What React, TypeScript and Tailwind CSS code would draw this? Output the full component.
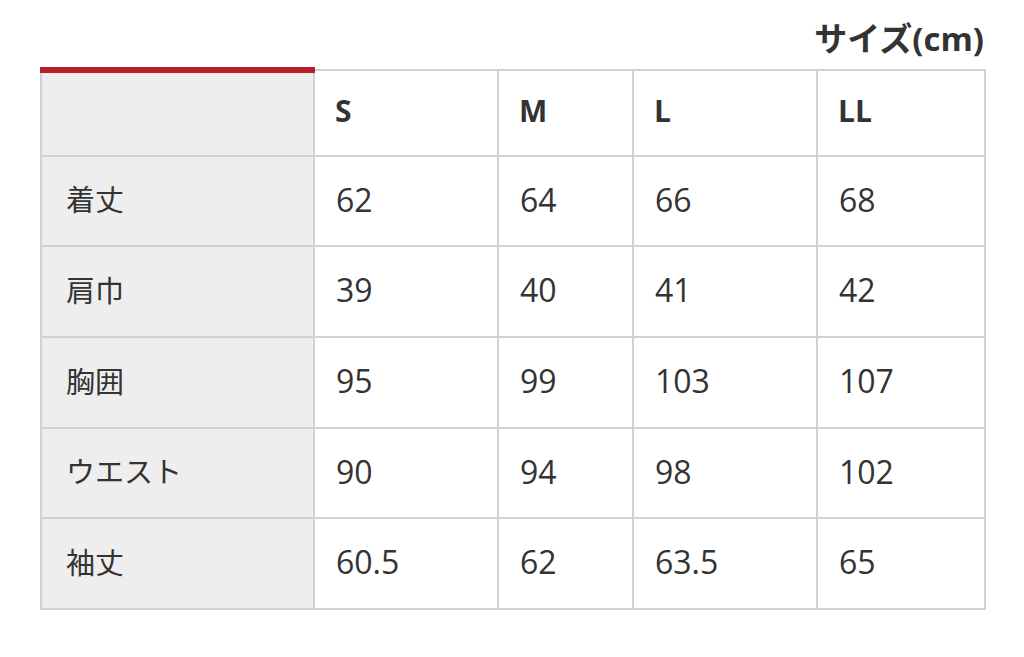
import React from 'react';

const sizes = ['S', 'M', 'L', 'LL'];

const rows: { label: string; values: string[]; h: string }[] = [
  { label: '着丈', values: ['62', '64', '66', '68'], h: 'h-[90px]' },
  { label: '肩巾', values: ['39', '40', '41', '42'], h: 'h-[91px]' },
  { label: '胸囲', values: ['95', '99', '103', '107'], h: 'h-[91px]' },
  { label: 'ウエスト', values: ['90', '94', '98', '102'], h: 'h-[90px]' },
  { label: '袖丈', values: ['60.5', '62', '63.5', '65'], h: 'h-[91px]' },
];

const colWidths = ['w-[273px]', 'w-[184px]', 'w-[135px]', 'w-[184px]', 'w-[168px]'];

export default function App() {
  return (
    <div
      className="w-[1024px] h-[657px] bg-white text-[#333]"
      style={{ fontFamily: '"Open Sans", "Noto Sans CJK JP", sans-serif' }}
    >
      <div className="pl-[40px] pr-[40px] pt-[18px]">
        <div className="flex justify-end h-[40px] items-center">
          <h2 className="text-[33px] font-bold leading-none">サイズ(cm)</h2>
        </div>
        <div className="mt-[9px]">
          <table className="border-collapse w-[944px] table-fixed">
            <colgroup>
              {colWidths.map((w, i) => (
                <col key={i} className={w} />
              ))}
            </colgroup>
            <thead>
              <tr className="h-[86px]">
                <th className="bg-[#eeeeee] border-2 border-[#d2d2d2] border-t-[6px] border-t-[#b5202a]" />
                {sizes.map(s => (
                  <th key={s} className="border-2 border-[#d2d2d2] text-left pl-[20px] pb-[6px] text-[30px] font-bold">
                    {s}
                  </th>
                ))}
              </tr>
            </thead>
            <tbody>
              {rows.map(r => (
                <tr key={r.label} className={r.h}>
                  <td className="bg-[#eeeeee] border-2 border-[#d2d2d2] pl-[24px] pb-[2px] text-[29px]">{r.label}</td>
                  {r.values.map((v, i) => (
                    <td key={i} className="border-2 border-[#d2d2d2] pl-[21px] pb-[3px] text-[32px]">
                      {v}
                    </td>
                  ))}
                </tr>
              ))}
            </tbody>
          </table>
        </div>
      </div>
    </div>
  );
}
